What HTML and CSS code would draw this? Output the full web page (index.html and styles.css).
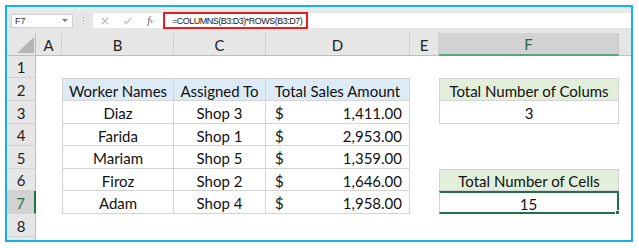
FILE: index.html
```html
<!DOCTYPE html>
<html>
<head>
<meta charset="utf-8">
<link rel="stylesheet" href="styles.css">
</head>
<body>
<div class="frame">
  <div class="fbar">
    <div class="namebox"><span class="ref">F7</span><span class="dd"></span></div>
    <div class="dots"><i></i><i></i><i></i></div>
    <div class="formula">
      <span class="ico x">
        <svg width="8" height="8" viewBox="0 0 8 8"><path d="M1 1L7 7M7 1L1 7" stroke="#b8b8b8" stroke-width="1.1" fill="none"/></svg>
      </span>
      <span class="ico ok">
        <svg width="9" height="8" viewBox="0 0 9 8"><path d="M1 4.2L3.3 6.6L8 1.2" stroke="#b8b8b8" stroke-width="1.1" fill="none"/></svg>
      </span>
      <span class="ico fx">f<sub>x</sub></span>
      <div class="expr">=COLUMNS(B3:D3)*ROWS(B3:D7)</div>
    </div>
  </div>
  <div class="sheet">
    <div class="corner"><span class="tri"></span></div>
    <div class="ch">A</div>
    <div class="ch">B</div>
    <div class="ch">C</div>
    <div class="ch">D</div>
    <div class="ch">E</div>
    <div class="ch sel">F</div>
    <div class="ch rest"></div>

    <div class="rh">1</div>
    <div class="c span7"></div>

    <div class="rh">2</div>
    <div class="c"></div>
    <div class="c t th first top">Worker Names</div>
    <div class="c t th top">Assigned To</div>
    <div class="c t th top">Total Sales Amount</div>
    <div class="c"></div>
    <div class="c t tg first top">Total Number of Colums</div>
    <div class="c"></div>

    <div class="rh">3</div>
    <div class="c"></div>
    <div class="c t first">Diaz</div>
    <div class="c t">Shop 3</div>
    <div class="c t money"><span>$</span><span>1,411.00</span></div>
    <div class="c"></div>
    <div class="c t first">3</div>
    <div class="c"></div>

    <div class="rh">4</div>
    <div class="c"></div>
    <div class="c t first">Farida</div>
    <div class="c t">Shop 1</div>
    <div class="c t money"><span>$</span><span>2,953.00</span></div>
    <div class="c span3"></div>

    <div class="rh">5</div>
    <div class="c"></div>
    <div class="c t first">Mariam</div>
    <div class="c t">Shop 5</div>
    <div class="c t money"><span>$</span><span>1,359.00</span></div>
    <div class="c span3"></div>

    <div class="rh">6</div>
    <div class="c"></div>
    <div class="c t first">Firoz</div>
    <div class="c t">Shop 2</div>
    <div class="c t money"><span>$</span><span>1,646.00</span></div>
    <div class="c"></div>
    <div class="c t tg first top">Total Number of Cells</div>
    <div class="c"></div>

    <div class="rh sel">7</div>
    <div class="c"></div>
    <div class="c t first">Adam</div>
    <div class="c t">Shop 4</div>
    <div class="c t money"><span>$</span><span>1,958.00</span></div>
    <div class="c"></div>
    <div class="c t first active">15<span class="handle"></span></div>
    <div class="c"></div>

    <div class="rh">8</div>
    <div class="c span7"></div>

    <div class="rh"></div>
    <div class="c span7"></div>
  </div>
</div>
</body>
</html>
```
FILE: styles.css
```css
* { box-sizing: border-box; }
html, body { margin: 0; padding: 0; background: #ffffff; }
body { width: 639px; height: 248px; overflow: hidden; }

.frame {
  margin: 5px 0 0 5px;
  width: 628px;
  height: 237px;
  border: 2px solid #12b1ef;
  background: #e6e6e6;
  overflow: hidden;
  font-family: Lato, "Liberation Sans", sans-serif;
}

.fbar {
  display: flex;
  align-items: center;
  height: 26px;
  padding: 6px 0 5px 4px;
  background: linear-gradient(#eaeaea 0, #eaeaea 5px, #e6e6e6 5px);
}

.namebox {
  width: 62px;
  height: 14px;
  background: #fff;
  border: 1px solid #d0d0d0;
  display: flex;
  align-items: center;
  justify-content: space-between;
  padding: 0 4px 0 3px;
  font-family: "Liberation Sans", sans-serif;
  font-size: 9px;
  color: #333;
}
.dd {
  width: 0; height: 0;
  border-left: 3px solid transparent;
  border-right: 3px solid transparent;
  border-top: 3px solid #777;
}

.dots {
  width: 20px;
  display: flex;
  flex-direction: column;
  align-items: center;
  gap: 2px;
}
.dots i { display: block; width: 1px; height: 1px; background: #b0b0b0; }

.formula {
  flex: 1;
  height: 15px;
  background: #fff;
  display: flex;
  align-items: center;
  padding-left: 8px;
}
.ico { display: flex; align-items: center; justify-content: center; }
.x { width: 8px; margin-right: 14px; }
.ok { width: 9px; margin-right: 13px; }
.fx {
  width: 10px;
  font-family: "Liberation Serif", serif;
  font-style: italic;
  font-size: 10px;
  color: #555;
  margin-right: 8px;
  line-height: 1;
}
.fx sub { font-size: 6px; vertical-align: -1px; }

.expr {
  width: 145px;
  height: 17px;
  margin: -1px 0;
  border: 2px solid #ee1c1c;
  font-family: "Liberation Sans", sans-serif;
  font-size: 9px;
  letter-spacing: -0.5px;
  color: #222;
  display: flex;
  align-items: center;
  padding-left: 7px;
  white-space: nowrap;
}

.sheet {
  display: grid;
  grid-template-columns: 29px 26px 112px 92px 144px 29px 180px 12px;
  grid-template-rows: 23px 22px 23px 23px 22px 23px 22px 23px 23px 22px;
  background: #fff;
  font-size: 15px;
  color: #111;
}

.corner {
  background: #e6e6e6;
  border-right: 1px solid #bdbdbd;
  border-bottom: 1px solid #bdbdbd;
  position: relative;
}
.tri {
  position: absolute;
  right: 1px; bottom: 2px;
  width: 0; height: 0;
  border-left: 17px solid transparent;
  border-bottom: 16px solid #b5b5b5;
}

.ch {
  background: #e6e6e6;
  border-right: 1px solid #cfcfcf;
  border-bottom: 1px solid #bdbdbd;
  display: flex;
  align-items: center;
  justify-content: center;
  padding-top: 1px;
  color: #222;
}
.ch.sel {
  background: #d2d2d2;
  color: #2b5f44;
  border-bottom: 2px solid #5aa37a;
  border-right: 1px solid #c6c6c6;
}
.ch.rest { border-right: none; }

.rh {
  background: #e6e6e6;
  border-right: 1px solid #bdbdbd;
  border-bottom: 1px solid #d2d2d2;
  display: flex;
  align-items: center;
  justify-content: center;
  padding-top: 1px;
  color: #222;
}
.rh.sel {
  background: #d2d2d2;
  color: #217346;
  border-right: 2px solid #217346;
}

.c { background: #fff; }
.span7 { grid-column: span 7; }
.span3 { grid-column: span 3; }

.t {
  border-right: 1px solid #d4d4d4;
  border-bottom: 1px solid #d4d4d4;
  display: flex;
  align-items: center;
  justify-content: center;
  padding-top: 2px;
  white-space: nowrap;
}
.t.first { border-left: 1px solid #d4d4d4; }
.t.top { border-top: 1px solid #d4d4d4; }
.th { background: #ddebf7; }
.tg { background: #e2efda; }

.money {
  justify-content: space-between;
  padding: 2px 7px 0 9px;
}

.active {
  border: 2px solid #217346;
  position: relative;
}
.handle {
  position: absolute;
  right: -3px; bottom: -3px;
  width: 5px; height: 5px;
  background: #217346;
  border: 1px solid #fff;
}
```
